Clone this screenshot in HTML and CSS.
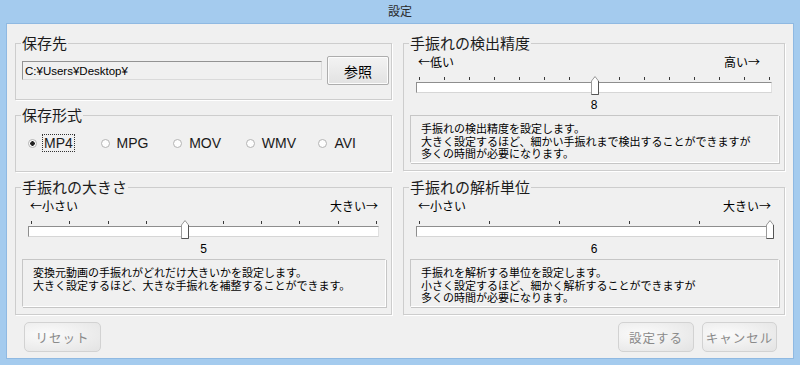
FILE: index.html
```html
<!DOCTYPE html>
<html lang="ja">
<head>
    <meta charset="UTF-8">
    <title>設定</title>
    <link rel="stylesheet" href="styles.css">
</head>
<body>

<div class="window">
    <div class="titlebar">設定</div>

    <div class="content">
        <div class="panels">
            <div class="column">
                <fieldset class="box box-path">
                    <legend>保存先</legend>
                    <div class="path-row">
                        <input type="text" class="path-input" value="C:¥Users¥Desktop¥" readonly>
                        <button class="browse-btn">参照</button>
                    </div>
                </fieldset>

                <fieldset class="box box-format">
                    <legend>保存形式</legend>
                    <div class="radio-row">
                        <label class="radio"><span class="dot checked"></span><span class="focus">MP4</span></label>
                        <label class="radio"><span class="dot"></span><span>MPG</span></label>
                        <label class="radio"><span class="dot"></span><span>MOV</span></label>
                        <label class="radio"><span class="dot"></span><span>WMV</span></label>
                        <label class="radio"><span class="dot"></span><span>AVI</span></label>
                    </div>
                </fieldset>

                <fieldset class="box box-slider">
                    <legend>手振れの大きさ</legend>
                    <div class="slider">
                        <div class="slider-labels">
                            <span>←小さい</span>
                            <span>大きい→</span>
                        </div>
                        <div class="ticks">
                            <span></span><span></span><span></span><span></span><span></span>
                            <span></span><span></span><span></span><span></span><span></span>
                            <svg class="thumb" style="left: 44.44%;" width="8" height="19" viewBox="0 0 8 19">
                                <polygon points="0.5,5 4,0.5 7.5,5 7.5,18.5 0.5,18.5" fill="#fff" stroke="#9a9a9a"/>
                                <polyline points="7.5,5 7.5,18.5 0.5,18.5" fill="none" stroke="#555"/>
                            </svg>
                        </div>
                        <div class="track"></div>
                        <div class="slider-value">5</div>
                    </div>
                    <div class="desc">
                        変換元動画の手振れがどれだけ大きいかを設定します。<br>
                        大きく設定するほど、大きな手振れを補整することができます。
                    </div>
                </fieldset>
            </div>

            <div class="column">
                <fieldset class="box box-slider">
                    <legend>手振れの検出精度</legend>
                    <div class="slider">
                        <div class="slider-labels inset-right">
                            <span>←低い</span>
                            <span>高い→</span>
                        </div>
                        <div class="ticks">
                            <span></span><span></span><span></span><span></span><span></span>
                            <span></span><span></span><span></span><span></span><span></span>
                            <span></span><span></span><span></span><span></span><span></span>
                            <svg class="thumb" style="left: 50%;" width="8" height="19" viewBox="0 0 8 19">
                                <polygon points="0.5,5 4,0.5 7.5,5 7.5,18.5 0.5,18.5" fill="#fff" stroke="#9a9a9a"/>
                                <polyline points="7.5,5 7.5,18.5 0.5,18.5" fill="none" stroke="#555"/>
                            </svg>
                        </div>
                        <div class="track"></div>
                        <div class="slider-value">8</div>
                    </div>
                    <div class="desc">
                        手振れの検出精度を設定します。<br>
                        大きく設定するほど、細かい手振れまで検出することができますが<br>
                        多くの時間が必要になります。
                    </div>
                </fieldset>

                <fieldset class="box box-slider">
                    <legend>手振れの解析単位</legend>
                    <div class="slider">
                        <div class="slider-labels">
                            <span>←小さい</span>
                            <span>大きい→</span>
                        </div>
                        <div class="ticks">
                            <span></span><span></span><span></span>
                            <span></span><span></span><span></span>
                            <svg class="thumb" style="left: 100%;" width="8" height="19" viewBox="0 0 8 19">
                                <polygon points="0.5,5 4,0.5 7.5,5 7.5,18.5 0.5,18.5" fill="#fff" stroke="#9a9a9a"/>
                                <polyline points="7.5,5 7.5,18.5 0.5,18.5" fill="none" stroke="#555"/>
                            </svg>
                        </div>
                        <div class="track"></div>
                        <div class="slider-value">6</div>
                    </div>
                    <div class="desc">
                        手振れを解析する単位を設定します。<br>
                        小さく設定するほど、細かく解析することができますが<br>
                        多くの時間が必要になります。
                    </div>
                </fieldset>
            </div>
        </div>

        <div class="buttons">
            <button class="btn btn-reset" disabled>リセット</button>
            <div class="buttons-right">
                <button class="btn btn-ok" disabled>設定する</button>
                <button class="btn btn-cancel">キャンセル</button>
            </div>
        </div>
    </div>
</div>

</body>
</html>
```

FILE: styles.css
```css
body {
    margin: 0;
    background: #a4cbee;
    font-family: "Liberation Sans", "Noto Sans CJK JP", sans-serif;
    color: #000;
}

.window {
    width: 800px;
    height: 365px;
    padding: 0 7px 7px;
    box-sizing: border-box;
    display: flex;
    flex-direction: column;
}

.titlebar {
    height: 24px;
    line-height: 24px;
    text-align: center;
    font-size: 12px;
    color: #2a2a2a;
}

.content {
    flex: 1;
    background: #f0f0f0;
    box-shadow: 0 0 0 1px #8fb9e2;
    padding: 11px 8px 6px;
    box-sizing: border-box;
    display: flex;
    flex-direction: column;
}

.panels {
    display: grid;
    grid-template-columns: 377px 382px;
    column-gap: 11px;
    height: 280px;
}

.column {
    display: flex;
    flex-direction: column;
    justify-content: space-between;
}

/* group boxes */
.box {
    margin: 0;
    padding: 0;
    min-width: 0;
    border: 1px solid #cdcdcd;
    box-shadow: 1px 1px 0 #fff;
    box-sizing: border-box;
}

.box legend {
    font-family: "Noto Sans CJK JP", sans-serif;
    font-size: 15px;
    line-height: 16px;
    padding: 0 1px;
    margin-left: 5px;
    color: #1c1c1c;
}

.box-path,
.box-format {
    height: 65px;
}

.box-slider {
    height: 136px;
}

/* save path */
.path-row {
    display: flex;
    align-items: center;
    gap: 5px;
    margin: 5px 2px 0 6px;
}

.path-input {
    width: 300px;
    height: 19px;
    box-sizing: border-box;
    margin: 0;
    padding: 0 2px;
    border: 1px solid;
    border-color: #939393 #dadada #dadada #939393;
    background: #f0f0f0;
    font-family: "Liberation Sans", sans-serif;
    font-size: 11.5px;
    color: #000;
    outline: none;
}

.browse-btn {
    width: 62px;
    height: 29px;
    margin: 0;
    padding: 0;
    border: 1px solid #adadad;
    border-radius: 2px;
    background: linear-gradient(#f3f3f3, #e2e2e2);
    box-shadow: inset 0 0 0 1px #fcfcfc;
    font-family: "Noto Sans CJK JP", sans-serif;
    font-size: 14px;
    color: #000;
}

/* format radios */
.radio-row {
    display: flex;
    align-items: center;
    height: 20px;
    margin: 10px 0 0 12px;
}

.radio {
    width: 74.5px;
    display: flex;
    align-items: center;
    gap: 7px;
    font-size: 14px;
    color: #1a1a1a;
}

.dot {
    width: 9px;
    height: 9px;
    box-sizing: border-box;
    border: 1px solid #b3b3b3;
    border-radius: 50%;
    background: #fdfdfd;
}

.dot.checked {
    background: radial-gradient(circle, #222 0, #222 2px, #fdfdfd 2.5px);
}

.focus {
    outline: 1px dotted #333;
    outline-offset: 0;
    padding: 0 1px;
    margin-left: -1px;
}

/* sliders */
.slider {
    margin: 4px 12px 0 12px;
}

.slider-labels {
    display: flex;
    justify-content: space-between;
    font-family: "Noto Sans CJK JP", sans-serif;
    font-size: 12px;
    line-height: 14px;
    padding: 0 1px 0 2px;
}

.slider-labels.inset-right {
    padding-right: 12px;
}

.ticks {
    position: relative;
    display: flex;
    justify-content: space-between;
    height: 3px;
    margin: 8px 2px 0 3px;
}

.ticks span {
    width: 1px;
    height: 3px;
    background: #3a3a3a;
}

.thumb {
    position: absolute;
    top: -1px;
    margin-left: -4px;
}

.track {
    height: 11px;
    margin-top: 2px;
    box-sizing: border-box;
    background: #fff;
    border: 1px solid;
    border-color: #8e8e8e #e0e0e0 #d6d6d6 #8e8e8e;
}

.slider-value {
    margin-top: 4px;
    height: 16px;
    line-height: 16px;
    text-align: center;
    font-size: 12px;
}

.desc {
    height: 48px;
    margin: 2px 5px 0 6px;
    padding: 6px 10px 0;
    box-sizing: border-box;
    border: 1px solid;
    border-color: #c6c6c6 #fff #fff #c6c6c6;
    box-shadow: 1px 1px 0 #c6c6c6;
    font-family: "Noto Sans CJK JP", sans-serif;
    font-size: 11px;
    line-height: 12.5px;
    white-space: nowrap;
}

/* bottom buttons */
.buttons {
    display: flex;
    justify-content: space-between;
    margin-top: 7px;
    padding: 0 8px 0 9px;
    height: 30px;
}

.buttons-right {
    display: flex;
    gap: 8px;
}

.btn {
    height: 30px;
    margin: 0;
    padding: 0;
    border: 1px solid #d2d2d2;
    border-radius: 5px;
    background: radial-gradient(ellipse at 30% 40%, #fbfbfb, #e3e3e3);
    font-family: "Noto Sans CJK JP", sans-serif;
    font-size: 12.5px;
    letter-spacing: 1px;
    color: #8a8a8a;
}

.btn-reset {
    width: 77px;
}

.btn-ok {
    width: 76px;
}

.btn-cancel {
    width: 75px;
}
```
